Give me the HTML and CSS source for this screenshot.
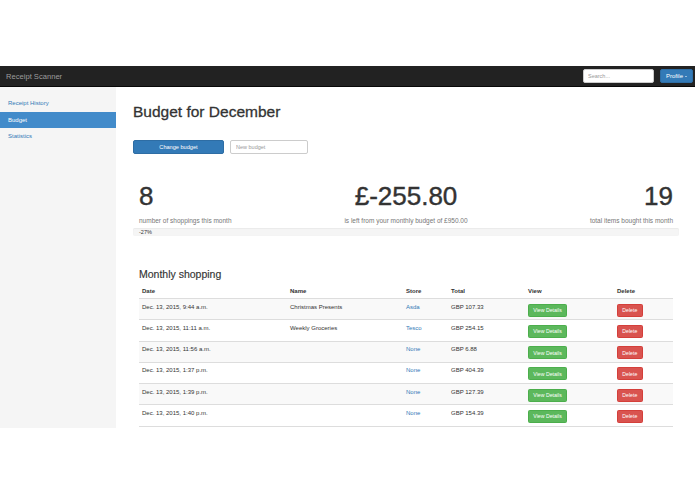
FILE: index.html
```html
<!DOCTYPE html>
<html>
<head>
<meta charset="utf-8">
<title>Receipt Scanner</title>
<link rel="stylesheet" href="styles.css">
</head>
<body>
<div class="top-space"></div>
<nav class="navbar">
  <span class="brand">Receipt Scanner</span>
  <div class="nav-right">
    <input class="search" type="text" placeholder="Search...">
    <button class="btn btn-primary profile">Profile <span class="caret"></span></button>
  </div>
</nav>
<div class="layout">
  <aside class="sidebar">
    <a class="side-item">Receipt History</a>
    <a class="side-item active">Budget</a>
    <a class="side-item">Statistics</a>
  </aside>
  <main class="main">
    <h1 class="title">Budget for December</h1>
    <div class="budget-form">
      <button class="btn btn-primary change">Change budget</button>
      <input class="budget-input" type="text" placeholder="New budget">
    </div>
    <div class="stats">
      <div class="stat stat-left">
        <div class="num">8</div>
        <div class="label">number of shoppings this month</div>
      </div>
      <div class="stat stat-center">
        <div class="num">£-255.80</div>
        <div class="label">is left from your monthly budget of £950.00</div>
      </div>
      <div class="stat stat-right">
        <div class="num">19</div>
        <div class="label">total items bought this month</div>
      </div>
    </div>
    <div class="progress"><span class="progress-text">-27%</span></div>
    <h2 class="subtitle">Monthly shopping</h2>
    <table class="table">
      <thead>
        <tr>
          <th class="c-date">Date</th>
          <th class="c-name">Name</th>
          <th class="c-store">Store</th>
          <th class="c-total">Total</th>
          <th class="c-view">View</th>
          <th class="c-del">Delete</th>
        </tr>
      </thead>
      <tbody>
        <tr>
          <td>Dec. 13, 2015, 9:44 a.m.</td><td>Christmas Presents</td><td><a class="link">Asda</a></td><td>GBP 107.33</td>
          <td><button class="btn btn-sm btn-success">View Details</button></td><td><button class="btn btn-sm btn-danger">Delete</button></td>
        </tr>
        <tr>
          <td>Dec. 13, 2015, 11:11 a.m.</td><td>Weekly Groceries</td><td><a class="link">Tesco</a></td><td>GBP 254.15</td>
          <td><button class="btn btn-sm btn-success">View Details</button></td><td><button class="btn btn-sm btn-danger">Delete</button></td>
        </tr>
        <tr>
          <td>Dec. 13, 2015, 11:56 a.m.</td><td></td><td><a class="link">None</a></td><td>GBP 6.88</td>
          <td><button class="btn btn-sm btn-success">View Details</button></td><td><button class="btn btn-sm btn-danger">Delete</button></td>
        </tr>
        <tr>
          <td>Dec. 13, 2015, 1:37 p.m.</td><td></td><td><a class="link">None</a></td><td>GBP 404.39</td>
          <td><button class="btn btn-sm btn-success">View Details</button></td><td><button class="btn btn-sm btn-danger">Delete</button></td>
        </tr>
        <tr>
          <td>Dec. 13, 2015, 1:39 p.m.</td><td></td><td><a class="link">None</a></td><td>GBP 127.39</td>
          <td><button class="btn btn-sm btn-success">View Details</button></td><td><button class="btn btn-sm btn-danger">Delete</button></td>
        </tr>
        <tr>
          <td>Dec. 13, 2015, 1:40 p.m.</td><td></td><td><a class="link">None</a></td><td>GBP 154.39</td>
          <td><button class="btn btn-sm btn-success">View Details</button></td><td><button class="btn btn-sm btn-danger">Delete</button></td>
        </tr>
      </tbody>
    </table>
  </main>
</div>
</body>
</html>
```

FILE: styles.css
```css
* { box-sizing: border-box; }
html, body { margin: 0; padding: 0; background: #fff; }
body {
  font-family: "Liberation Sans", Arial, sans-serif;
  color: #333;
  font-size: 6px;
}
.top-space { height: 66px; }

.navbar {
  height: 21px;
  background: #222;
  border-bottom: 1px solid #080808;
  display: flex;
  align-items: center;
  justify-content: space-between;
  padding: 0 2px 0 6px;
}
.brand { color: #9d9d9d; font-size: 7.6px; }
.nav-right { display: flex; align-items: center; gap: 6px; }
.search {
  width: 71px; height: 14px;
  border: 1px solid #ccc; border-radius: 2px;
  background: #fff;
  font-family: inherit; font-size: 5.5px;
  padding: 0 4px; outline: none;
}
.search::placeholder, .budget-input::placeholder { color: #999; }

.btn {
  font-family: inherit;
  border: 1px solid transparent;
  border-radius: 2px;
  color: #fff;
  cursor: pointer;
  padding: 0;
  display: inline-flex;
  align-items: center;
  justify-content: center;
}
.btn-primary { background: #337ab7; border-color: #2e6da4; }
.btn-success { background: #5cb85c; border-color: #4cae4c; }
.btn-danger { background: #d9534f; border-color: #d43f3a; }
.profile { width: 33px; height: 14px; font-size: 6px; gap: 2px; }
.caret {
  width: 0; height: 0;
  border-left: 1.8px solid transparent;
  border-right: 1.8px solid transparent;
  border-top: 1.8px solid #fff;
}

.layout { display: flex; }
.sidebar {
  width: 116px;
  flex: none;
  background: #f5f5f5;
  padding-top: 8px;
  display: flex;
  flex-direction: column;
}
.side-item {
  display: block;
  padding: 4px 8px;
  line-height: 8.5px;
  font-size: 6px;
  color: #337ab7;
}
.side-item.active { background: #428bca; color: #fff; }

.main { flex: 1; padding: 0 16px 1px 17px; }
.title {
  margin: 15px 0 0;
  font-size: 15.5px;
  line-height: 20px;
  font-weight: 500;
  color: #333;
  -webkit-text-stroke: 0.3px #333;
}
.budget-form { margin-top: 18px; display: flex; gap: 6px; }
.change { width: 91px; height: 14px; font-size: 5.6px; }
.budget-input {
  width: 78px; height: 14px;
  border: 1px solid #ccc; border-radius: 2px;
  font-family: inherit; font-size: 5.5px;
  padding: 0 5px; outline: none;
}

.stats {
  margin-top: 27px;
  padding: 0 6px;
  display: grid;
  grid-template-columns: 1fr 1fr 1fr;
}
.stat-center { text-align: center; }
.stat-right { text-align: right; }
.num { font-size: 26px; line-height: 30px; color: #333; -webkit-text-stroke: 0.4px #333; }
.label { margin-top: 4.5px; font-size: 6.5px; line-height: 9px; color: #777; }

.progress {
  margin-top: 3.5px;
  height: 8px;
  background: #f5f5f5;
  border-radius: 2px;
  box-shadow: inset 0 0.5px 1px rgba(0,0,0,0.08);
  padding-left: 6px;
  font-size: 5.5px;
  line-height: 8px;
}

.subtitle {
  margin: 31.5px 0 0;
  padding-left: 6px;
  font-size: 10.5px;
  line-height: 13px;
  font-weight: 500;
  -webkit-text-stroke: 0.15px #333;
}

.table {
  margin: 4.5px 6px 0;
  width: 534px;
  border-collapse: collapse;
  table-layout: fixed;
}
.c-date { width: 148px; }
.c-name { width: 116px; }
.c-store { width: 45px; }
.c-total { width: 77px; }
.c-view { width: 89px; }
.c-del { width: 59px; }
.table th {
  text-align: left;
  font-weight: bold;
  font-size: 6px;
  line-height: 7px;
  padding: 3px 3px;
  border-bottom: 1px solid #ddd;
}
.table td {
  vertical-align: top;
  font-size: 6px;
  line-height: 7px;
  padding: 4.5px 3px 2.8px;
  border-top: 1px solid #ddd;
}
.table tbody tr:last-child td { border-bottom: 1px solid #ddd; }
.table tbody tr:nth-child(odd) { background: #f9f9f9; }
.link { color: #337ab7; }
.btn-sm { height: 13px; padding: 0 4.3px; font-size: 5.2px; border-radius: 1.5px; }
```
